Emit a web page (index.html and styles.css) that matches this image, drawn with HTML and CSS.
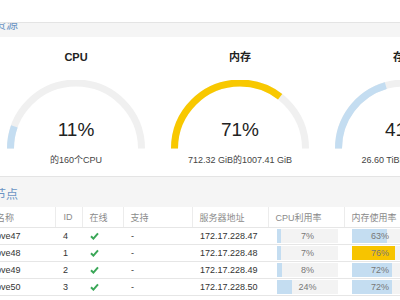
FILE: index.html
```html
<!DOCTYPE html>
<html lang="zh-CN">
<head>
  <meta charset="UTF-8" />
  <title>集群概览</title>
  <link rel="stylesheet" href="styles.css">
</head>
<body>

<div class="topbar"></div>

<div class="page">
  <div class="section-head">资源</div>

  <div class="gauges">
    <div class="gauge">
      <div class="gauge-title">CPU</div>
      <div class="gauge-wrap">
        <svg class="gauge-svg" viewBox="0 0 140 70" width="140" height="70">
          <path class="track" d="M 4.5 68.5 A 65.5 65.5 0 0 1 135.5 68.5" />
          <path class="fill blue" pathLength="100" stroke-dasharray="11 100" d="M 4.5 68.5 A 65.5 65.5 0 0 1 135.5 68.5" />
        </svg>
        <div class="gauge-value">11%</div>
      </div>
      <div class="gauge-sub">的160个CPU</div>
    </div>

    <div class="gauge">
      <div class="gauge-title">内存</div>
      <div class="gauge-wrap">
        <svg class="gauge-svg" viewBox="0 0 140 70" width="140" height="70">
          <path class="track" d="M 4.5 68.5 A 65.5 65.5 0 0 1 135.5 68.5" />
          <path class="fill yellow" pathLength="100" stroke-dasharray="71 100" d="M 4.5 68.5 A 65.5 65.5 0 0 1 135.5 68.5" />
        </svg>
        <div class="gauge-value">71%</div>
      </div>
      <div class="gauge-sub">712.32 GiB的1007.41 GiB</div>
    </div>

    <div class="gauge">
      <div class="gauge-title">存储</div>
      <div class="gauge-wrap">
        <svg class="gauge-svg" viewBox="0 0 140 70" width="140" height="70">
          <path class="track" d="M 4.5 68.5 A 65.5 65.5 0 0 1 135.5 68.5" />
          <path class="fill blue" pathLength="100" stroke-dasharray="41 100" d="M 4.5 68.5 A 65.5 65.5 0 0 1 135.5 68.5" />
        </svg>
        <div class="gauge-value">41%</div>
      </div>
      <div class="gauge-sub">26.60 TiB的64.87 TiB</div>
    </div>
  </div>

  <div class="section-head">节点</div>

  <table class="nodes">
    <colgroup>
      <col class="c-name"><col class="c-id"><col class="c-online"><col class="c-sup">
      <col class="c-addr"><col class="c-cpu"><col class="c-mem">
    </colgroup>
    <thead>
      <tr>
        <th>名称</th><th>ID</th><th>在线</th><th>支持</th>
        <th>服务器地址</th><th>CPU利用率</th><th>内存使用率</th>
      </tr>
    </thead>
    <tbody id="nodeRows"></tbody>
  </table>
</div>

<script>
  const nodes = [
    { name: "pve47", id: 4, addr: "172.17.228.47", cpu: 7, mem: 63 },
    { name: "pve48", id: 1, addr: "172.17.228.48", cpu: 7, mem: 76 },
    { name: "pve49", id: 2, addr: "172.17.228.49", cpu: 8, mem: 72 },
    { name: "pve50", id: 3, addr: "172.17.228.50", cpu: 24, mem: 72 }
  ];

  const check = `<svg class="check" width="9" height="8" viewBox="0 0 9 8"><path d="M1 4.2 L3.4 6.6 L8 1.4" /></svg>`;

  function bar(value, warn) {
    return `<div class="bar"><div class="bar-fill ${warn ? "warn" : ""}" style="width:${value}%"></div><span>${value}%</span></div>`;
  }

  document.getElementById("nodeRows").innerHTML = nodes.map(n => `
    <tr>
      <td>${n.name}</td>
      <td>${n.id}</td>
      <td>${check}</td>
      <td>-</td>
      <td>${n.addr}</td>
      <td>${bar(n.cpu, n.cpu >= 75)}</td>
      <td>${bar(n.mem, n.mem >= 75)}</td>
    </tr>
  `).join("");
</script>

</body>
</html>
```

FILE: styles.css
```css
html, body {
  overflow: hidden;
}

body {
  margin: 0;
  font-family: "Liberation Sans", "Noto Sans CJK SC", sans-serif;
  background: #fff;
  color: #333;
}

.topbar {
  position: fixed;
  top: 0;
  left: 0;
  right: 0;
  height: 22px;
  background: #fff;
  border-bottom: 1px solid #e4e4e4;
  z-index: 2;
}

.page {
  margin-left: -16px;
  padding-top: 7px;
}

.section-head {
  height: 30px;
  box-sizing: border-box;
  padding: 11px 0 0 10px;
  background: #f5f5f5;
  color: #6a94c4;
  font-size: 12px;
  line-height: 14px;
}

.gauges {
  display: grid;
  grid-template-columns: repeat(3, 164px);
  margin-left: 10px;
  padding: 12px 0 10px;
  border-bottom: 1px solid #e4e4e4;
  margin-right: -100px;
}

.gauge {
  display: flex;
  flex-direction: column;
  align-items: center;
}

.gauge-title {
  font-size: 11px;
  font-weight: bold;
  line-height: 16px;
  color: #222;
}

.gauge-wrap {
  position: relative;
  width: 140px;
  height: 70px;
  margin-top: 15px;
}

.gauge-svg {
  display: block;
}

.track,
.fill {
  fill: none;
  stroke-width: 7;
}

.track {
  stroke: #f0f0f0;
}

.fill.blue {
  stroke: #c4ddf1;
}

.fill.yellow {
  stroke: #f8c800;
}

.gauge-value {
  position: absolute;
  top: 40px;
  left: 0;
  right: 0;
  text-align: center;
  font-size: 19px;
  line-height: 19px;
  color: #222;
}

.gauge-sub {
  margin-top: 4px;
  font-size: 9px;
  line-height: 12px;
  color: #444;
  white-space: nowrap;
}

.nodes {
  border-collapse: collapse;
  table-layout: fixed;
  width: 436px;
  font-size: 9px;
}

.c-name { width: 71px; }
.c-id { width: 27px; }
.c-online { width: 41px; }
.c-sup { width: 69px; }
.c-addr { width: 76px; }
.c-cpu { width: 76px; }
.c-mem { width: 76px; }

.nodes th {
  height: 20px;
  padding: 0 0 0 7px;
  text-align: left;
  font-weight: normal;
  color: #8a8a8a;
  border-bottom: 1px solid #e6e6e6;
  border-left: 1px solid #ececec;
}

.nodes th:first-child {
  border-left: none;
  padding-left: 12px;
}

.nodes td {
  height: 16px;
  padding: 0 0 0 8px;
  color: #333;
  border-bottom: 1px solid #e6e6e6;
  white-space: nowrap;
}

.nodes td:first-child {
  padding-left: 12px;
}

.nodes th:nth-child(2),
.nodes td:nth-child(2) {
  padding-left: 8px;
}

.check {
  display: block;
}

.check path {
  fill: none;
  stroke: #3aa757;
  stroke-width: 2;
}

.nodes td:nth-child(6) {
  padding-left: 9px;
}

.bar {
  position: relative;
  height: 14px;
  background: #f3f3f3;
  text-align: center;
  line-height: 14px;
  color: #777;
}

.nodes td:nth-child(6) .bar {
  width: 61px;
}

.nodes td:nth-child(7) .bar {
  width: 56px;
}

.bar-fill {
  position: absolute;
  top: 0;
  left: 0;
  bottom: 0;
  background: #c4ddf1;
}

.bar-fill.warn {
  background: #f7c400;
}

.bar span {
  position: relative;
}
```
